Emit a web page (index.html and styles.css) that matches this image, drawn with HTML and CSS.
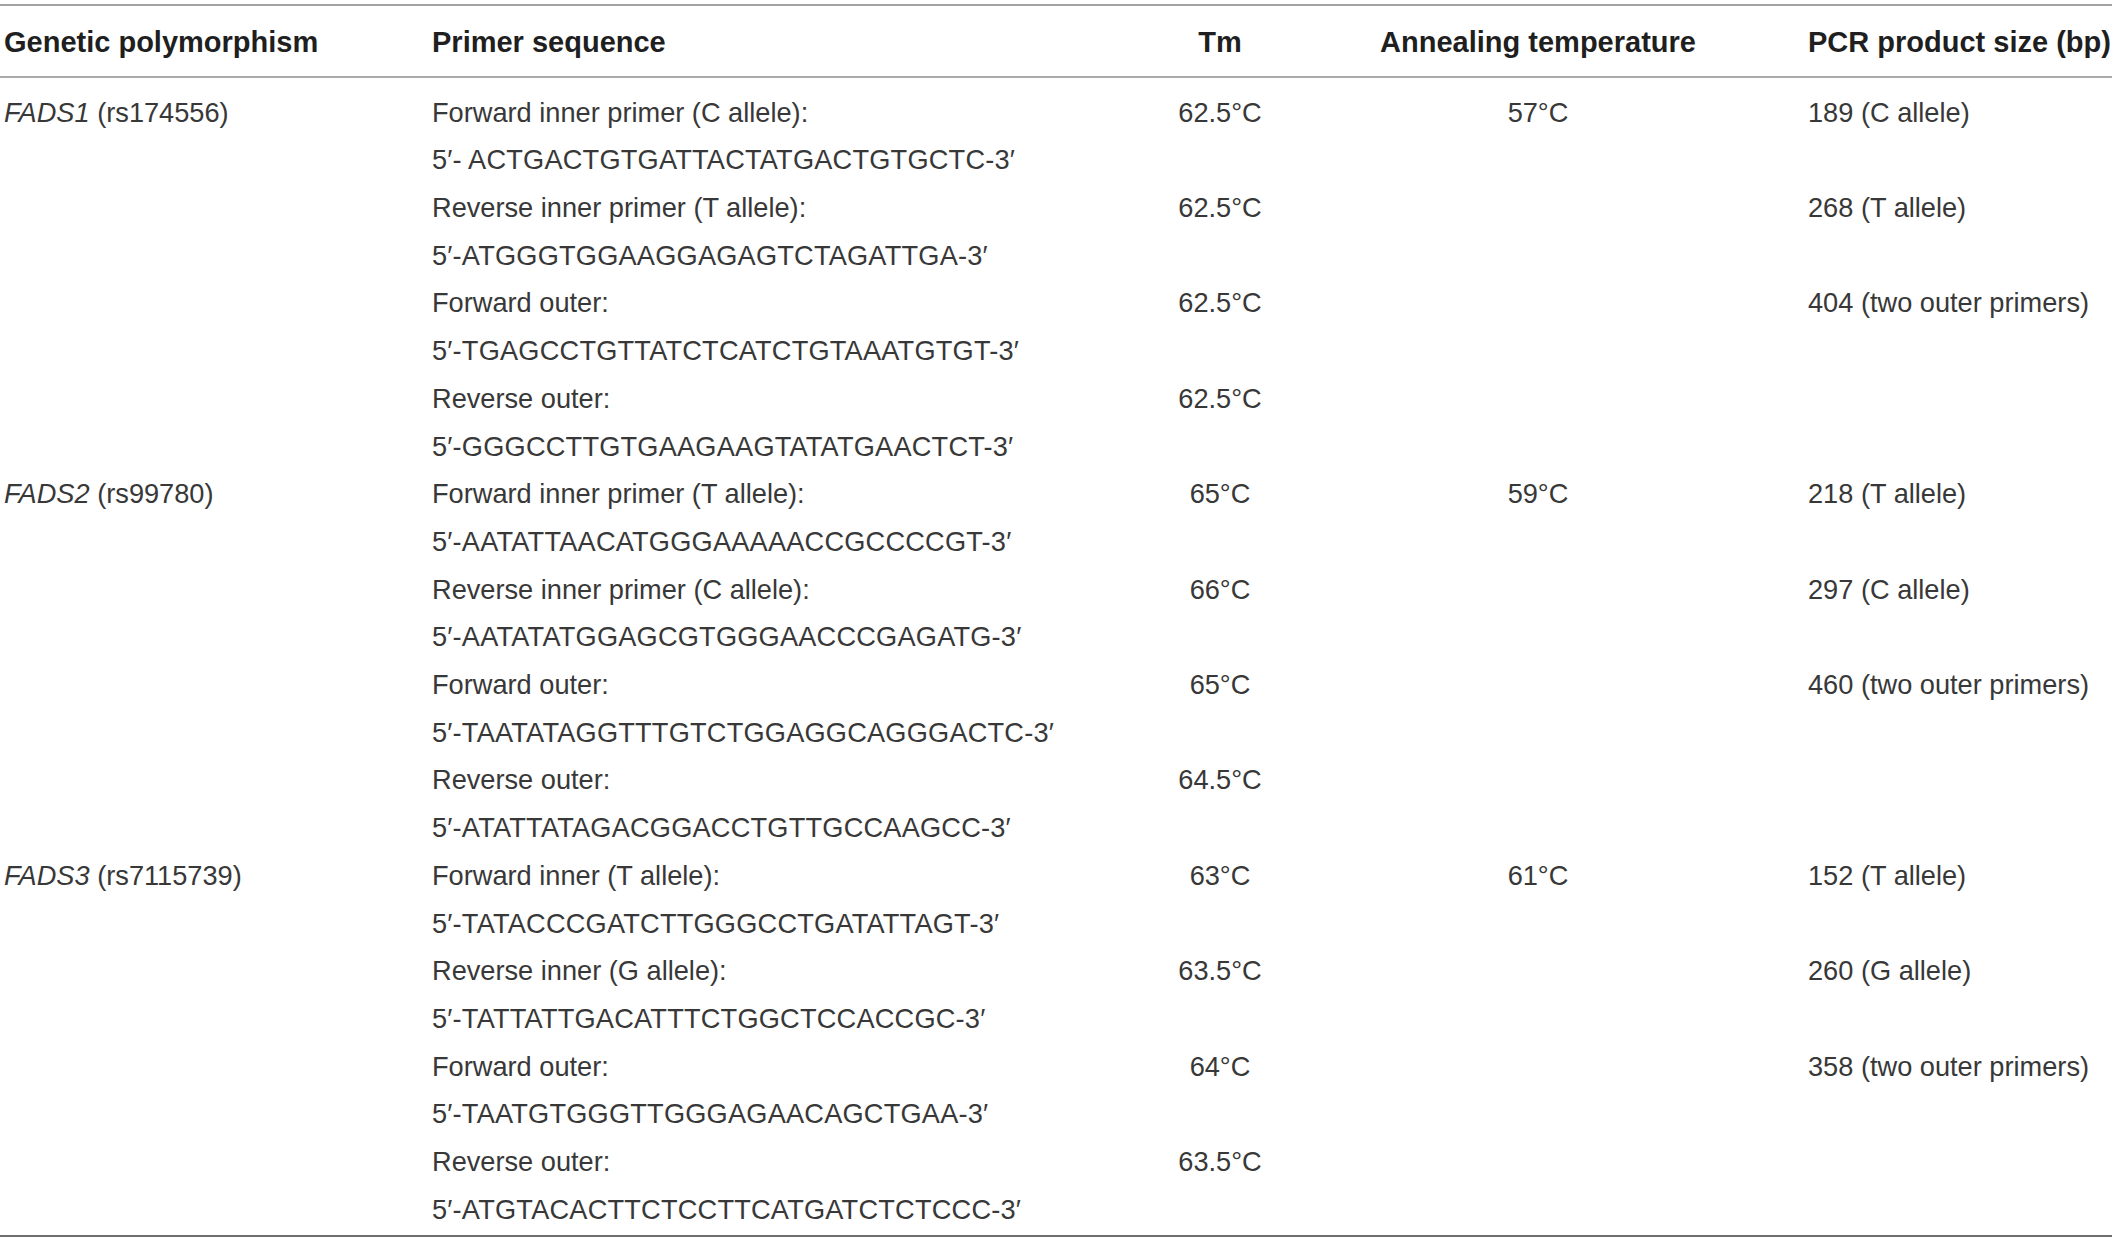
FILE: index.html
```html
<!DOCTYPE html>
<html lang="en">
<head>
<meta charset="utf-8">
<title>Primers</title>
<link rel="stylesheet" href="styles.css">
</head>
<body>
<table class="primers">
  <colgroup>
    <col class="c1"><col class="c2"><col class="c3"><col class="c4"><col class="c5">
  </colgroup>
  <thead>
    <tr>
      <th class="left">Genetic polymorphism</th>
      <th class="left">Primer sequence</th>
      <th class="center">Tm</th>
      <th class="center">Annealing temperature</th>
      <th class="left pcr">PCR product size (bp)</th>
    </tr>
  </thead>
  <tbody>
    <tr class="first">
      <td class="gene"><i>FADS1</i> (rs174556)</td>
      <td>Forward inner primer (C allele):<br><span class="seq">5′- ACTGACTGTGATTACTATGACTGTGCTC-3′</span></td>
      <td class="center">62.5°C</td>
      <td class="center">57°C</td>
      <td class="pcr">189 (C allele)</td>
    </tr>
    <tr>
      <td class="gene"></td>
      <td>Reverse inner primer (T allele):<br><span class="seq">5′-ATGGGTGGAAGGAGAGTCTAGATTGA-3′</span></td>
      <td class="center">62.5°C</td>
      <td class="center"></td>
      <td class="pcr">268 (T allele)</td>
    </tr>
    <tr>
      <td class="gene"></td>
      <td>Forward outer:<br><span class="seq">5′-TGAGCCTGTTATCTCATCTGTAAATGTGT-3′</span></td>
      <td class="center">62.5°C</td>
      <td class="center"></td>
      <td class="pcr">404 (two outer primers)</td>
    </tr>
    <tr>
      <td class="gene"></td>
      <td>Reverse outer:<br><span class="seq">5′-GGGCCTTGTGAAGAAGTATATGAACTCT-3′</span></td>
      <td class="center">62.5°C</td>
      <td class="center"></td>
      <td class="pcr"></td>
    </tr>
    <tr>
      <td class="gene"><i>FADS2</i> (rs99780)</td>
      <td>Forward inner primer (T allele):<br><span class="seq">5′-AATATTAACATGGGAAAAACCGCCCCGT-3′</span></td>
      <td class="center">65°C</td>
      <td class="center">59°C</td>
      <td class="pcr">218 (T allele)</td>
    </tr>
    <tr>
      <td class="gene"></td>
      <td>Reverse inner primer (C allele):<br><span class="seq">5′-AATATATGGAGCGTGGGAACCCGAGATG-3′</span></td>
      <td class="center">66°C</td>
      <td class="center"></td>
      <td class="pcr">297 (C allele)</td>
    </tr>
    <tr>
      <td class="gene"></td>
      <td>Forward outer:<br><span class="seq">5′-TAATATAGGTTTGTCTGGAGGCAGGGACTC-3′</span></td>
      <td class="center">65°C</td>
      <td class="center"></td>
      <td class="pcr">460 (two outer primers)</td>
    </tr>
    <tr>
      <td class="gene"></td>
      <td>Reverse outer:<br><span class="seq">5′-ATATTATAGACGGACCTGTTGCCAAGCC-3′</span></td>
      <td class="center">64.5°C</td>
      <td class="center"></td>
      <td class="pcr"></td>
    </tr>
    <tr>
      <td class="gene"><i>FADS3</i> (rs7115739)</td>
      <td>Forward inner (T allele):<br><span class="seq">5′-TATACCCGATCTTGGGCCTGATATTAGT-3′</span></td>
      <td class="center">63°C</td>
      <td class="center">61°C</td>
      <td class="pcr">152 (T allele)</td>
    </tr>
    <tr>
      <td class="gene"></td>
      <td>Reverse inner (G allele):<br><span class="seq">5′-TATTATTGACATTTCTGGCTCCACCGC-3′</span></td>
      <td class="center">63.5°C</td>
      <td class="center"></td>
      <td class="pcr">260 (G allele)</td>
    </tr>
    <tr>
      <td class="gene"></td>
      <td>Forward outer:<br><span class="seq">5′-TAATGTGGGTTGGGAGAACAGCTGAA-3′</span></td>
      <td class="center">64°C</td>
      <td class="center"></td>
      <td class="pcr">358 (two outer primers)</td>
    </tr>
    <tr class="last">
      <td class="gene"></td>
      <td>Reverse outer:<br><span class="seq">5′-ATGTACACTTCTCCTTCATGATCTCTCCC-3′</span></td>
      <td class="center">63.5°C</td>
      <td class="center"></td>
      <td class="pcr"></td>
    </tr>
  </tbody>
</table>
</body>
</html>
```

FILE: styles.css
```css
html, body {
  margin: 0;
  padding: 0;
  background: #ffffff;
}

body {
  font-family: "Liberation Sans", Arial, sans-serif;
  color: #383838;
}

.primers {
  width: 2112px;
  margin-top: 4px;
  border-collapse: collapse;
  table-layout: fixed;
  border-top: 2px solid #a3a3a3;
  border-bottom: 2px solid #6e6e6e;
}

.c1 { width: 432px; }
.c2 { width: 678px; }
.c3 { width: 220px; }
.c4 { width: 416px; }
.c5 { width: 366px; }

.primers th {
  font-size: 29px;
  font-weight: bold;
  color: #1f1f1f;
  line-height: 40px;
  padding: 16px 0 14px 0;
  border-bottom: 2px solid #ababab;
  white-space: nowrap;
}

.primers td {
  font-size: 27.2px;
  font-weight: normal;
  line-height: 47.7px;
  padding: 0;
  vertical-align: top;
  white-space: nowrap;
}

.seq {
  letter-spacing: 0.2px;
}

.left { text-align: left; }
.center { text-align: center; }

.primers th:first-child,
.primers td.gene {
  padding-left: 4px;
}

.primers th.pcr,
.primers td.pcr {
  padding-left: 62px;
}

.primers tr.first td {
  padding-top: 10.6px;
}

.primers tr.last td {
  padding-bottom: 1.4px;
}
```
